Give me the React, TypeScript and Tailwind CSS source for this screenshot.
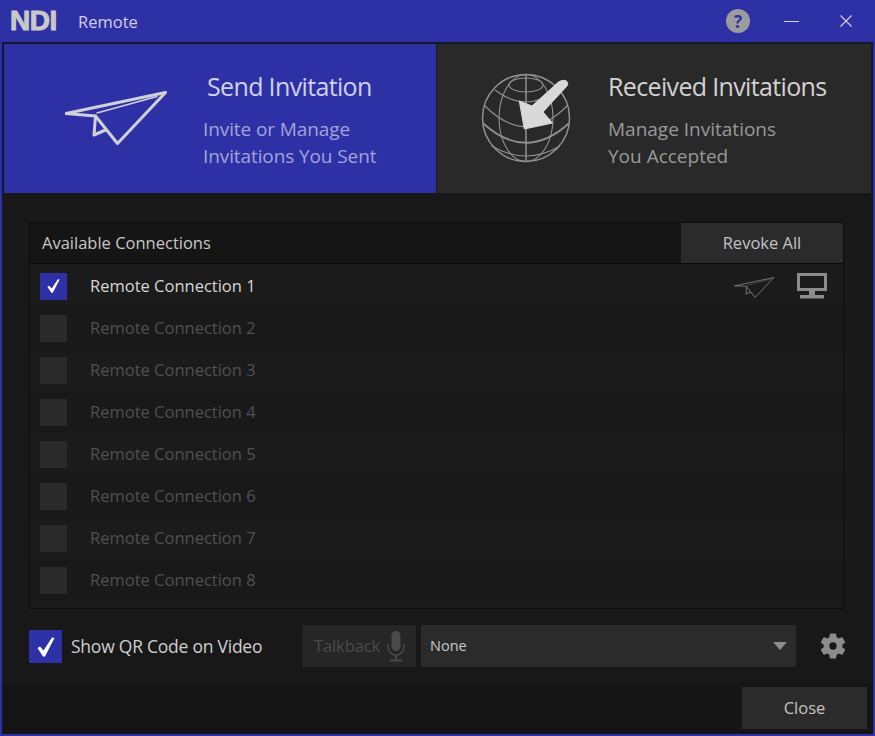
import React from "react";

const font = { fontFamily: '"Open Sans", "Noto Sans", sans-serif' };

function Plane({ className, sw = 3 }: { className?: string; sw?: number }) {
  return (
    <svg viewBox="0 0 102 54" className={className} fill="none" stroke="currentColor" strokeWidth={sw} strokeLinejoin="round" strokeLinecap="round">
      <path d="M1 22.5 L100.5 1.5 L52.5 52.5 L30.5 25 Z" />
      <path d="M32 22 L92 5.5" strokeWidth={sw * 0.45} />
      <path d="M30.5 25 L29 44 L40.5 39" />
    </svg>
  );
}

function Globe() {
  return (
    <svg viewBox="0 0 92 92" className="w-[92px] h-[92px]" fill="none" stroke="#909090" strokeWidth="1.1">
      <circle cx="46" cy="46" r="43.5" strokeWidth="1.5" />
      <ellipse cx="46" cy="46" rx="27" ry="43.5" />
      <path d="M46 2.5 V89.5" strokeWidth="1.5" />
      <ellipse cx="46" cy="13" rx="17" ry="7" />
      <path d="M15 18 Q46 42 77 18" />
      <path d="M4 33 Q46 76 88 33" />
      <path d="M3.3 51.5 Q46 90 88.7 51.5" strokeWidth="1.7" />
      <path d="M11.7 74 Q46 94 80 74" />
      <path d="M39.3 29 L44.3 57 L72.5 51 L63 40 L87 14 Q89 10 85.5 8.5 Q82 7.5 78.5 10 L52 34 Z" fill="#d9d9d9" stroke="#d9d9d9" strokeWidth="1" strokeLinejoin="round" />
    </svg>
  );
}

function Check({ size }: { size: "sm" | "lg" }) {
  return (
    <svg viewBox="0 0 18 20" className={size === "lg" ? "w-[18px] h-[20px]" : "w-[13px] h-[16px]"} fill="#fff">
      <path d="M0.5 11 L3 9.5 L6.5 13.5 L15 0.5 L17.5 1 L8 19.5 L6 19.5 Z" />
    </svg>
  );
}

function Row({ n }: { n: number }) {
  const on = n === 1;
  return (
    <div className={`h-[42px] flex items-center pl-[10px] pr-[16px] ${n % 2 === 0 ? "bg-[#191919]" : "bg-[#1b1b1b]"}`}>
      <div className={`w-[27px] h-[27px] flex items-center justify-center ${on ? "bg-[#2e31a6]" : "bg-[#2a2a2a]"}`}>
        {on && <Check size="sm" />}
      </div>
      <span className={`ml-[23px] text-[16.5px] ${on ? "text-[#d6d6d6]" : "text-[#505050]"}`}>Remote Connection {n}</span>
      {on && (
        <div className="ml-auto flex items-center gap-[22px] text-[#8c8c8c]">
          <Plane className="w-[41px] h-[21px] mt-[3px]" sw={2} />
          <svg viewBox="0 0 30 27" className="w-[30px] h-[27px]" fill="#8c8c8c">
            <path fillRule="evenodd" d="M0 0 H30 V18 H0 Z M3 3 V15 H27 V3 Z" />
            <rect x="12" y="18" width="6" height="5" />
            <rect x="3" y="22" width="24" height="3.5" />
          </svg>
        </div>
      )}
    </div>
  );
}

export default function App() {
  return (
    <div style={font} className="w-[875px] h-[736px] bg-[#2e31a6] flex flex-col overflow-hidden">
      <div className="h-[42px] shrink-0 flex items-center pl-[10px] relative">
        <span className="text-[#c9c9c9] text-[28px] tracking-[-0.5px] leading-none w-[68px] [-webkit-text-stroke:1px_#c9c9c9]" style={{ fontFamily: '"Liberation Sans", sans-serif', fontWeight: 700 }}>NDI</span>
        <span className="text-[#cfd0e8] text-[16.5px] mt-[2px]">Remote</span>
        <div className="ml-auto flex items-center">
          <div className="w-[24px] h-[24px] rounded-full bg-[#9c9c9f] flex items-center justify-center text-[#2e31a6] text-[17px] font-bold leading-none">?</div>
          <div className="w-[15px] h-[1px] bg-[#d5d5e5] ml-[34px]" />
          <svg viewBox="0 0 12 12" className="w-[12px] h-[12px] ml-[41px] mr-[23px]" stroke="#d5d5e5" strokeWidth="1.1"><path d="M0.5 0.5 L11.5 11.5 M11.5 0.5 L0.5 11.5" /></svg>
        </div>
      </div>

      <div className="flex-1 mx-[2px] mb-[2px] bg-[#181818] flex flex-col min-h-0">
        <div className="h-[151px] shrink-0 flex bg-[#17172a] pl-[2px] pr-[2px] pt-[2px]">
          <div className="w-[432px] flex bg-[#2e31a6]">
            <div className="w-[198px] flex justify-end items-center pb-[1px]">
              <Plane className="w-[102px] h-[54px] text-[#d0d0d8] mr-[35px]" />
            </div>
            <div className="flex-1 pl-[1px] flex flex-col items-start">
              <div className="mt-[24px] ml-[4px] text-[25px] leading-[36px] tracking-[-0.65px] text-[#cfd1ec]">Send Invitation</div>
              <div className="mt-[12px] text-[19px] leading-[27px] tracking-[-0.1px] text-[#a2a4d8]">Invite or Manage<br />Invitations You Sent</div>
            </div>
          </div>
          <div className="ml-[1px] flex-1 flex bg-[#292929]">
            <div className="w-[171px] flex justify-start items-center pl-[43px] pb-[1px]">
              <Globe />
            </div>
            <div className="flex-1 flex flex-col items-start">
              <div className="mt-[24px] text-[25px] leading-[36px] tracking-[-0.65px] text-[#d2d2d2]">Received Invitations</div>
              <div className="mt-[12px] text-[19px] leading-[27px] text-[#999999]">Manage Invitations<br />You Accepted</div>
            </div>
          </div>
        </div>

        <div className="mt-[29px] ml-[27px] w-[815px] h-[387px] shrink-0 border border-[#0c0c0c] bg-[#1a1a1a] flex flex-col">
          <div className="h-[41px] shrink-0 border-b border-[#0c0c0c] bg-[#151515] flex items-center pl-[12px] mb-[1px]">
            <span className="text-[16.5px] text-[#c8c8c8]">Available Connections</span>
            <div className="ml-auto w-[162px] h-full bg-[#2b2b2b] flex items-center justify-center text-[16.5px] text-[#c4c4c4]">Revoke All</div>
          </div>
          {[1, 2, 3, 4, 5, 6, 7, 8].map((n) => <Row key={n} n={n} />)}
        </div>

        <div className="h-[74px] shrink-0 flex items-center pl-[27px]">
          <div className="w-[33px] h-[33px] mt-[1px] bg-[#2e31a6] flex items-center justify-center"><Check size="lg" /></div>
          <span className="ml-[9px] w-[231px] text-[17.5px] tracking-[-0.24px] text-[#cfcfcf]">Show QR Code on Video</span>
          <div className="w-[114px] h-[42px] bg-[#262626] flex items-center pl-[12px] text-[16.5px] tracking-[-0.1px] text-[#4a4a4a]">
            Talkback
            <svg viewBox="0 0 18 31" className="w-[18px] h-[31px] ml-[7px]" fill="#4a4a4a">
              <rect x="4.5" y="0" width="9" height="20" rx="4.5" />
              <path d="M1 13 V16 A8 8 0 0 0 17 16 V13" fill="none" stroke="#4a4a4a" strokeWidth="1.5" />
              <rect x="8" y="24" width="2" height="5" />
              <rect x="3" y="28.5" width="12" height="2" />
            </svg>
          </div>
          <div className="ml-[5px] w-[375px] h-[42px] bg-[#2b2b2b] flex items-center pl-[9px] pr-[9px] text-[14.5px] text-[#c8c8c8]">
            None
            <div className="ml-auto w-0 h-0 border-l-[7.5px] border-r-[7.5px] border-t-[8px] border-l-transparent border-r-transparent border-t-[#8c8c8c]" />
          </div>
          <svg viewBox="2 2 20 20" className="w-[26px] h-[26px] ml-[24px]" fill="#8c8c8c">
            <path d="M19.14 12.94c.04-.3.06-.61.06-.94s-.02-.64-.07-.94l2.03-1.58a.5.5 0 0 0 .12-.61l-1.92-3.32a.5.5 0 0 0-.59-.22l-2.39.96a7 7 0 0 0-1.62-.94l-.36-2.54a.48.48 0 0 0-.48-.41h-3.84a.48.48 0 0 0-.47.41l-.36 2.54c-.59.24-1.13.57-1.62.94l-2.39-.96a.5.5 0 0 0-.59.22L2.74 8.87a.48.48 0 0 0 .12.61l2.03 1.58c-.05.3-.09.63-.09.94s.02.64.07.94l-2.03 1.58a.5.5 0 0 0-.12.61l1.92 3.32c.12.22.37.29.59.22l2.39-.96c.5.38 1.03.7 1.62.94l.36 2.54c.05.24.24.41.48.41h3.84c.24 0 .44-.17.47-.41l.36-2.54c.59-.24 1.13-.56 1.62-.94l2.39.96c.22.08.47 0 .59-.22l1.92-3.32a.48.48 0 0 0-.12-.61l-2.01-1.58zM12 14.8A2.8 2.8 0 1 1 12 9.2a2.8 2.8 0 0 1 0 5.6z" />
          </svg>
        </div>

        <div className="flex-1 bg-[#151515] flex justify-end pt-[4px] pr-[6px]">
          <div className="w-[125px] h-[42px] bg-[#2b2b2b] flex items-center justify-center text-[16.5px] text-[#c4c4c4]">Close</div>
        </div>
      </div>
    </div>
  );
}
